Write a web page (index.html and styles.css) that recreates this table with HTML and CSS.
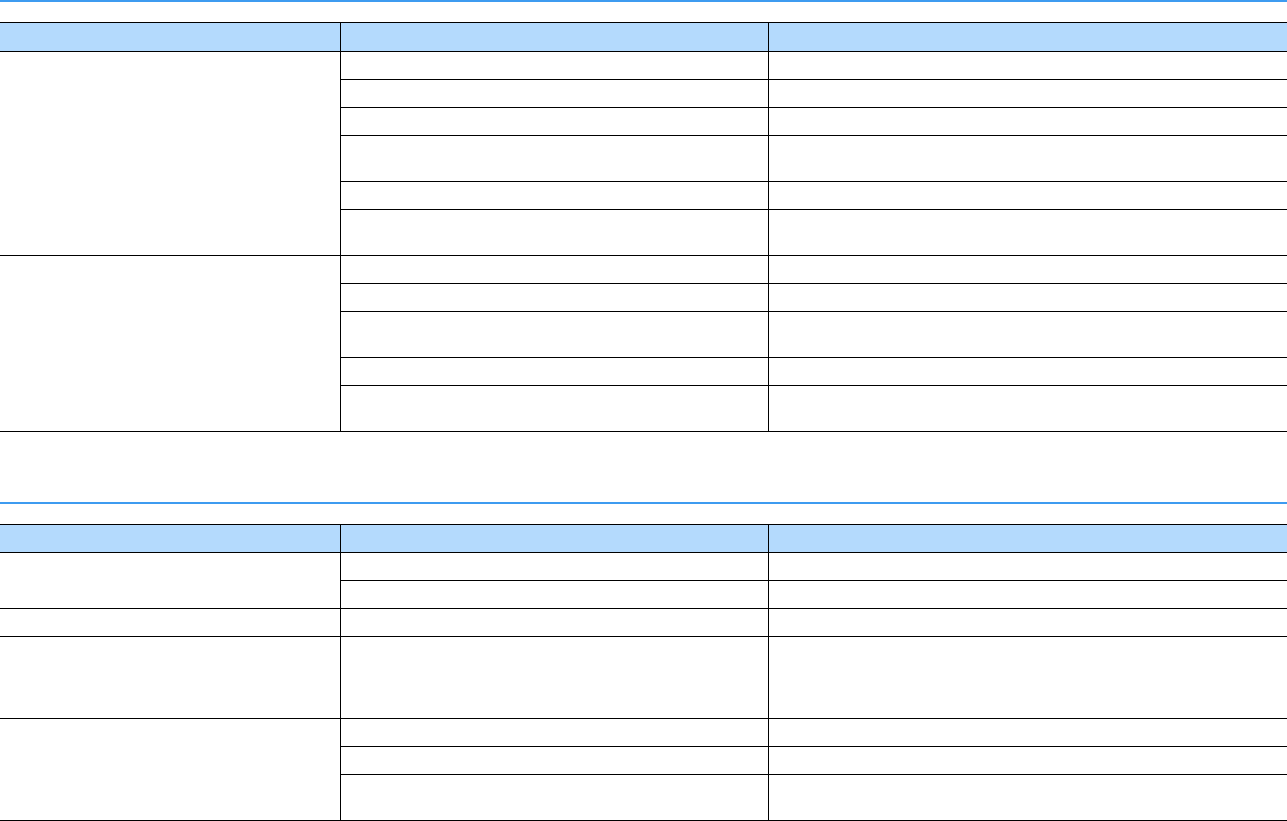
FILE: index.html
```html
<!DOCTYPE html>
<html lang="en">
<head>
  <meta charset="UTF-8" />
  <meta name="viewport" content="width=device-width, initial-scale=1.0" />
  <title>Tables</title>
  <link rel="stylesheet" href="styles.css">
</head>
<body>

<!-- first block -->
<div class="block">
  <div class="rule"></div>
  <table class="grid">
    <colgroup>
      <col class="c1"><col class="c2"><col>
    </colgroup>
    <thead>
      <tr class="r1 head-tall"><th></th><th></th><th></th></tr>
    </thead>
    <tbody>
      <tr class="r1"><td rowspan="6"></td><td></td><td></td></tr>
      <tr class="r1"><td></td><td></td></tr>
      <tr class="r1"><td></td><td></td></tr>
      <tr class="r2"><td></td><td></td></tr>
      <tr class="r1"><td></td><td></td></tr>
      <tr class="r2"><td></td><td></td></tr>

      <tr class="r1"><td rowspan="5"></td><td></td><td></td></tr>
      <tr class="r1"><td></td><td></td></tr>
      <tr class="r2"><td></td><td></td></tr>
      <tr class="r1"><td></td><td></td></tr>
      <tr class="r2"><td></td><td></td></tr>
    </tbody>
  </table>
</div>

<!-- second block -->
<div class="block block-next">
  <div class="rule"></div>
  <table class="grid">
    <colgroup>
      <col class="c1"><col class="c2"><col>
    </colgroup>
    <thead>
      <tr class="r1"><th></th><th></th><th></th></tr>
    </thead>
    <tbody>
      <tr class="r1"><td rowspan="2"></td><td></td><td></td></tr>
      <tr class="r1"><td></td><td></td></tr>
      <tr class="r1"><td></td><td></td><td></td></tr>
      <tr class="r4"><td></td><td></td><td></td></tr>
      <tr class="r1"><td rowspan="3"></td><td></td><td></td></tr>
      <tr class="r1"><td></td><td></td></tr>
      <tr class="r2"><td></td><td></td></tr>
    </tbody>
  </table>
</div>

</body>
</html>
```

FILE: styles.css
```css
* { margin: 0; padding: 0; box-sizing: border-box; }
body, html {
  background: #fff;
  font-family: Arial, "Liberation Sans", sans-serif;
  font-size: 14px;
  color: #000;
}

.rule {
  height: 2px;
  background: #3d9bf0;
  margin-bottom: 20px;
}

.block-next { margin-top: 70px; }

.grid {
  width: 100%;
  table-layout: fixed;
  border-collapse: collapse;
  border-left: hidden;
  border-right: hidden;
}

.c1 { width: 340px; }
.c2 { width: 428px; }

.grid th,
.grid td {
  border: 1px solid #000;
  padding: 0 6px;
  vertical-align: top;
  font-weight: normal;
  text-align: left;
}

.grid th { background: #b4dafd; }

.r1 { height: 28px; }
.r2 { height: 46px; }
.r4 { height: 82px; }
.head-tall { height: 29px; }
```
